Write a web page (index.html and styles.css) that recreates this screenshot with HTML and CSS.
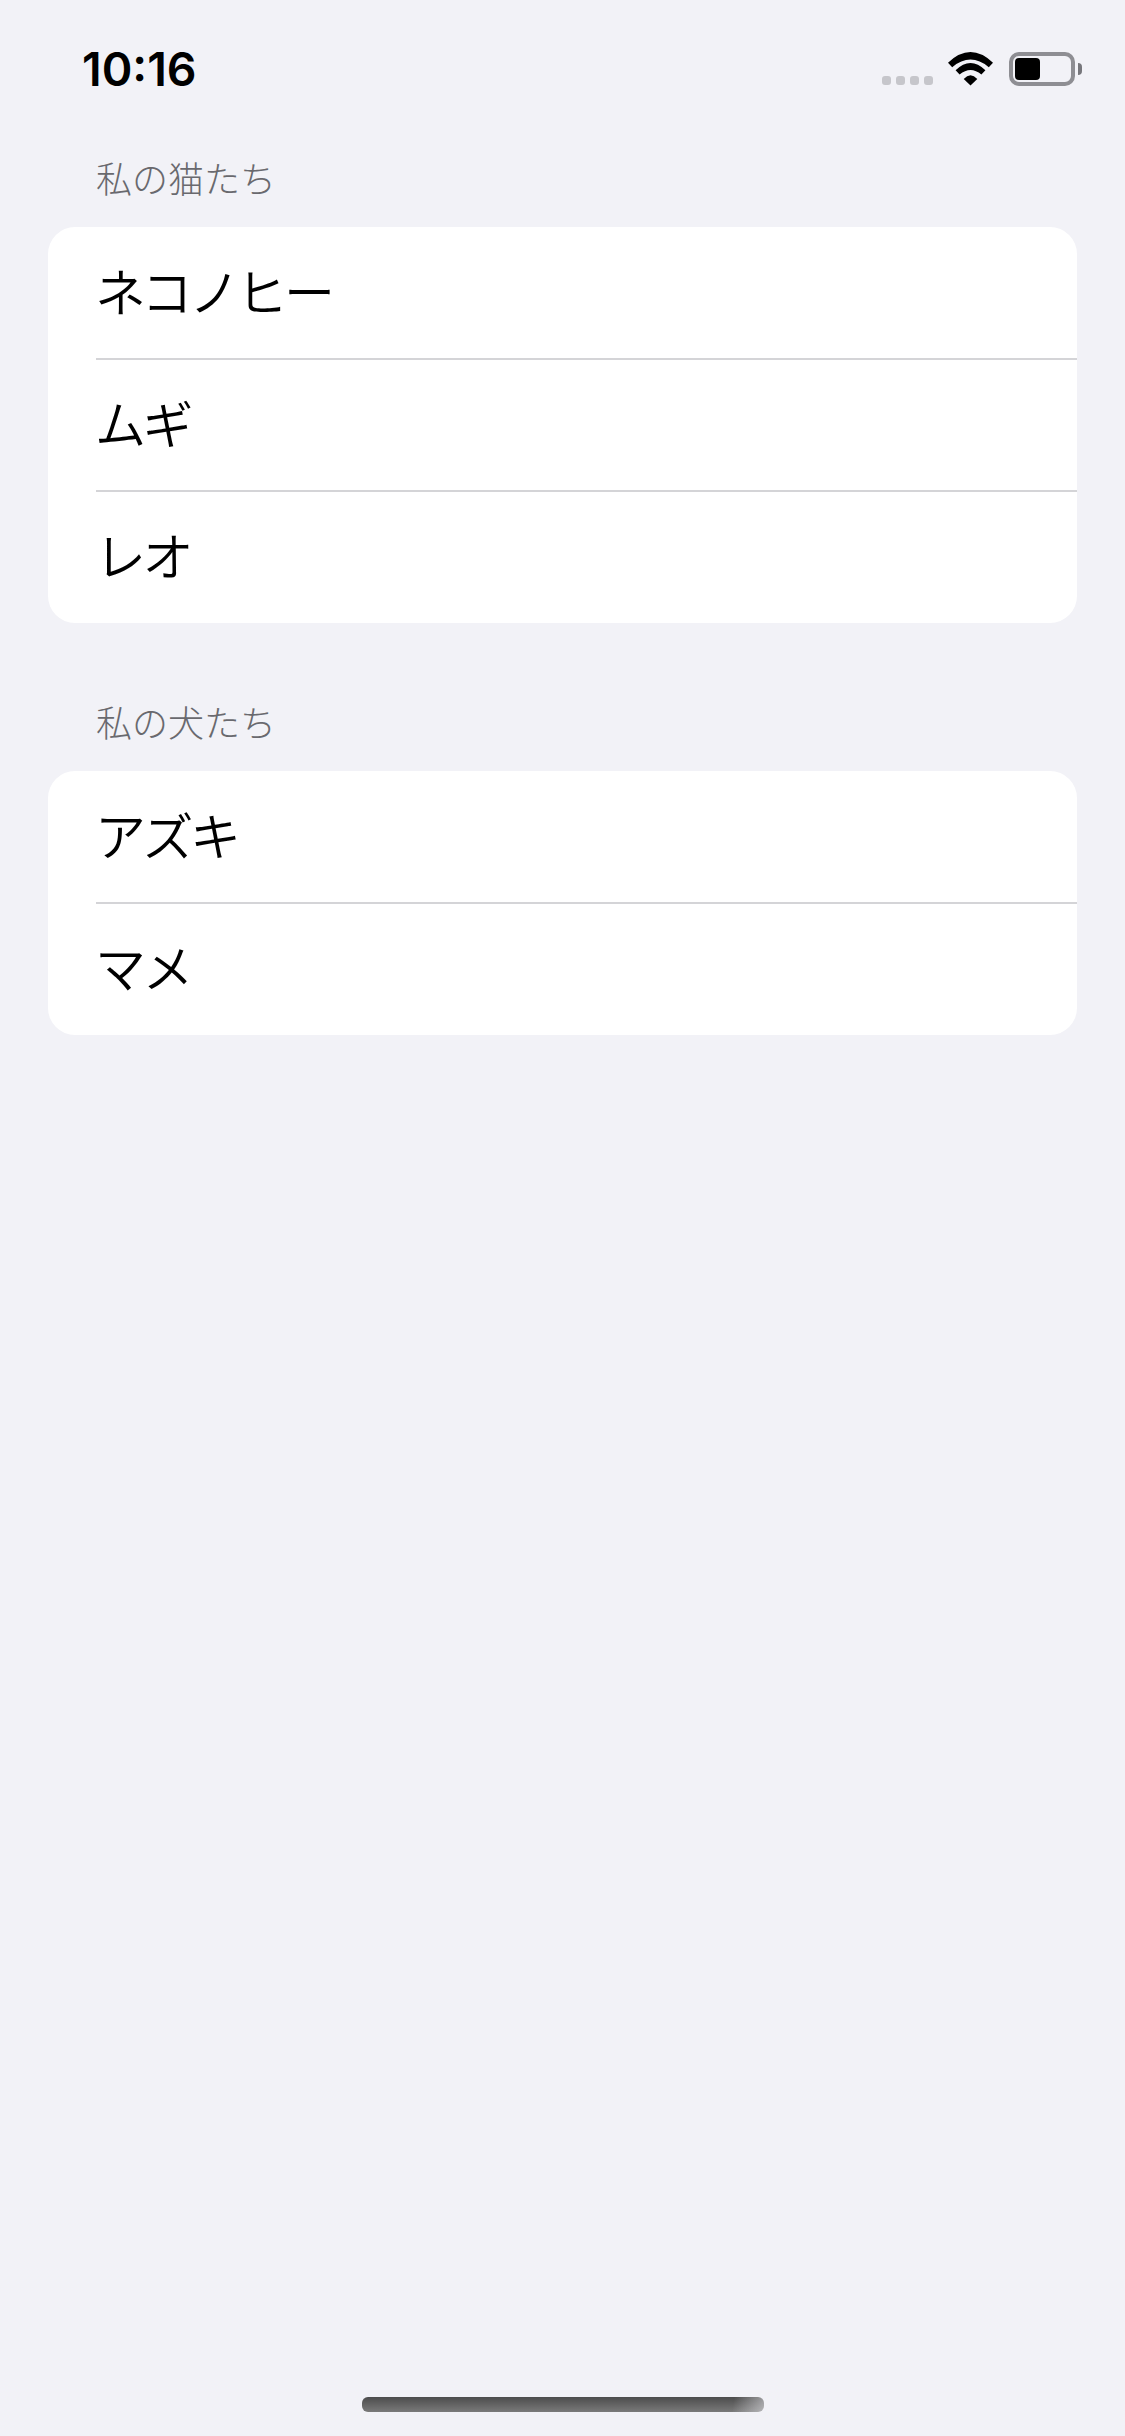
FILE: index.html
```html
<!DOCTYPE html>
<html lang="ja">

<head>
    <meta charset="UTF-8">
    <meta name="viewport" content="width=device-width, initial-scale=1.0">
    <title>ペット</title>
    <link rel="stylesheet" href="styles.css">
</head>

<body>
    <div class="page">
        <div class="status-bar">
            <span class="time">10:16</span>
            <div class="status-icons">
                <div class="signal-dots">
                    <span class="dot"></span>
                    <span class="dot"></span>
                    <span class="dot"></span>
                    <span class="dot"></span>
                </div>
                <svg class="wifi" width="45" height="34" viewBox="0 0 45 34">
                    <path d="M0 10.7Q22.5 -10.7 45 10.7L40.8 15.2Q22.5 0 4.2 15.2Z" />
                    <path d="M7.6 18.3Q22.5 3.7 37.4 18.3L33.4 22.5Q22.5 13.5 11.6 22.5Z" />
                    <path d="M15.7 27Q22.5 19.6 29.3 27L22.5 33.6Z" />
                </svg>
                <div class="battery">
                    <div class="battery-body">
                        <div class="battery-level"></div>
                    </div>
                    <div class="battery-nub"></div>
                </div>
            </div>
        </div>

        <section class="group first-group">
            <h2 class="group-title">私の猫たち</h2>
            <ul class="card">
                <li class="row">ネコノヒー</li>
                <li class="row">ムギ</li>
                <li class="row">レオ</li>
            </ul>
        </section>

        <section class="group">
            <h2 class="group-title">私の犬たち</h2>
            <ul class="card">
                <li class="row">アズキ</li>
                <li class="row">マメ</li>
            </ul>
        </section>

        <div class="home-indicator"></div>
    </div>
</body>

</html>
```

FILE: styles.css
```css
body {
    margin: 0;
    padding: 0;
    background-color: #f2f2f7;
    font-family: "Noto Sans CJK JP", "Noto Sans", sans-serif;
}

.page {
    display: flex;
    flex-direction: column;
    height: 2436px;
    overflow: hidden;
}

/* Status bar */
.status-bar {
    display: flex;
    justify-content: space-between;
    height: 149px;
    padding: 42px 43px 0 82px;
    box-sizing: border-box;
}

.time {
    font-family: Inter, sans-serif;
    font-size: 46.5px;
    font-weight: 600;
    line-height: 54px;
    color: #000;
}

.status-icons {
    display: flex;
    align-items: flex-start;
    padding-top: 10px;
}

.signal-dots {
    display: flex;
    gap: 5px;
    margin-top: 24px;
    margin-right: 15px;
}

.dot {
    width: 9px;
    height: 9px;
    border-radius: 3px;
    background-color: #c6c6cb;
}

.wifi {
    display: block;
    fill: #000;
    margin-right: 16px;
}

.battery {
    display: flex;
    align-items: center;
}

.battery-body {
    width: 66px;
    height: 34px;
    padding: 2px 0 0 2px;
    box-sizing: border-box;
    border: 4px solid #8e8e93;
    border-radius: 10px;
}

.battery-level {
    width: 25px;
    height: 22px;
    border-radius: 4px;
    background-color: #000;
}

.battery-nub {
    width: 4px;
    height: 12px;
    margin-left: 3px;
    border-radius: 0 5px 5px 0;
    background-color: #77777c;
}

/* Grouped list */
.group {
    margin: 0 48px;
    padding-top: 70px;
}

.first-group {
    padding-top: 0;
}

.group-title {
    margin: 0;
    padding: 0 0 21px 48px;
    height: 57px;
    font-size: 36px;
    font-weight: 300;
    line-height: 57px;
    color: #69696e;
}

.card {
    margin: 0;
    padding: 0;
    list-style: none;
    background-color: #fff;
    border-radius: 27px;
    overflow: hidden;
}

.row {
    position: relative;
    height: 132px;
    padding-left: 47px;
    font-size: 51px;
    font-weight: 350;
    line-height: 127px;
    letter-spacing: -3.5px;
    color: #000;
}

.row + .row::before {
    content: "";
    position: absolute;
    top: -1px;
    left: 48px;
    right: 0;
    height: 2px;
    background-color: #d4d4d7;
}

.home-indicator {
    width: 402px;
    height: 15px;
    margin: auto auto 24px;
    border-radius: 6px;
    background-image:
        linear-gradient(100deg, rgba(242, 242, 247, 0) 92%, rgba(242, 242, 247, 0.5) 100%),
        linear-gradient(to bottom, #4c4c4c, #7a7a7a);
}
```
